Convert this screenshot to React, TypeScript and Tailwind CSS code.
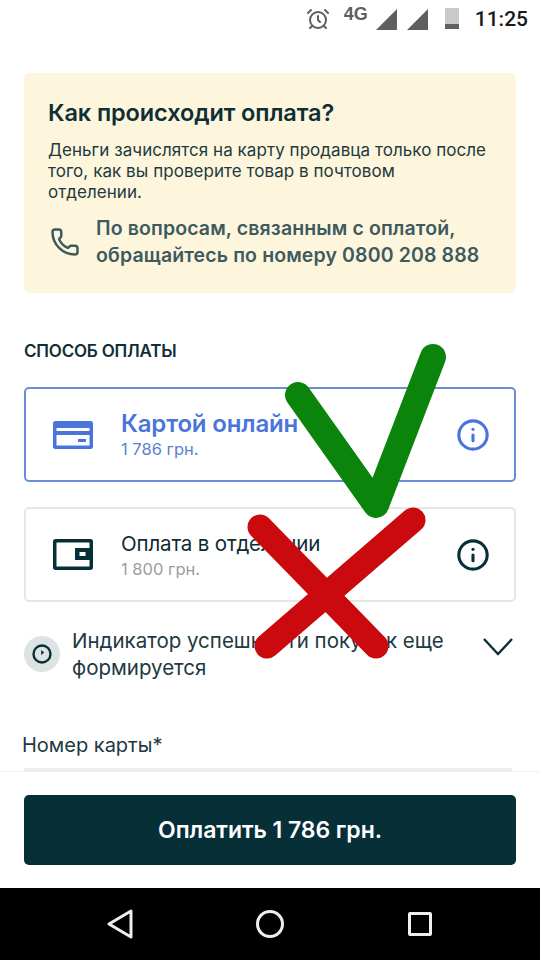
import React from "react";
import { AlarmClock, Phone, Info } from "lucide-react";

function Signal() {
  return (
    <svg width="21" height="21" viewBox="0 0 21 21" className="mt-[1px] text-[#5f5f5f]">
      <path d="M21 0v21H0z" fill="currentColor" />
    </svg>
  );
}

function CardIcon() {
  return (
    <svg width="40" height="28" viewBox="0 0 40 28">
      <rect x="0" y="0" width="40" height="28" rx="2.5" fill="#4a74dc" />
      <rect x="3.5" y="7" width="33" height="3" fill="#fff" />
      <path d="M3.5 14h33v10.5h-33z" fill="#fff" />
      <rect x="25" y="18" width="8" height="3" fill="#4a74dc" />
    </svg>
  );
}

function WalletIcon() {
  return (
    <svg width="40" height="31" viewBox="0 0 40 31">
      <rect x="1.75" y="1.75" width="36.5" height="27.5" rx="1" fill="none" stroke="#062f38" strokeWidth="3.5" />
      <rect x="22" y="9" width="16" height="12" fill="#062f38" />
      <rect x="26.5" y="13" width="6" height="4" fill="#fff" />
    </svg>
  );
}

function Method({ active, title, price, icon }: { active: boolean; title: string; price: string; icon: React.ReactNode }) {
  return (
    <div
      className={
        active
          ? "flex h-[95px] items-center rounded-[5px] border-2 border-[#6a8dd9] pl-[27px] pr-[24px]"
          : "flex h-[95px] items-center rounded-[5px] border-2 border-[#e6e6e6] pl-[27px] pr-[24px]"
      }
    >
      <div className="flex w-[40px] justify-center">{icon}</div>
      <div className="ml-[28px] flex flex-1 flex-col">
        <span
          className={
            active
              ? "text-[24px] leading-[28px] font-semibold tracking-[-0.15px] text-[#4a74dc]"
              : "text-[20.5px] leading-[28px] tracking-[-0.15px] text-[#0f2c33]"
          }
        >
          {title}
        </span>
        <span className={active ? "text-[16.5px] leading-[22px] text-[#5d80cf]" : "text-[16.5px] leading-[22px] text-[#9a9d9f]"}>
          {price}
        </span>
      </div>
      <Info size={34} strokeWidth={2.2} className={active ? "text-[#4a74dc]" : "text-[#062f38]"} />
    </div>
  );
}

export default function App() {
  return (
    <div className="relative flex h-[960px] w-[540px] flex-col overflow-hidden bg-white font-['Inter','Noto_Sans',sans-serif] text-[#0f2c33]">
      <div className="flex h-[37px] items-center justify-end pr-[12px] text-[#5f5f5f]">
        <AlarmClock size={24} strokeWidth={2} className="mt-[1px]" />
        <span className="mb-[10px] ml-[14px] font-['Liberation_Sans',sans-serif] text-[18px] leading-[20px] font-bold">4G</span>
        <div className="ml-[8px] flex gap-[10px]">
          <Signal />
          <Signal />
        </div>
        <div className="ml-[17px] flex h-[21px] w-[14px] flex-col justify-end bg-[#c9c9c9]">
          <div className="h-[5px] bg-[#606060]" />
        </div>
        <span className="ml-[16px] font-['Roboto',sans-serif] text-[21px] leading-[24px] font-medium text-[#1a1a1a]">11:25</span>
      </div>

      <div className="flex-1 px-[24px] pt-[36px]">
        <div className="h-[220px] rounded-[6px] bg-[#fdf6dc] pt-[25px] pl-[24px] pr-[16px]">
          <div className="text-[23.5px] leading-[30px] font-semibold tracking-[-0.1px] text-[#0e2f35]">Как происходит оплата?</div>
          <div className="mt-[12px] text-[17px] leading-[21px] tracking-[0.05px] text-[#21393f]">
            Деньги зачислятся на карту продавца только после
            <br />
            того, как вы проверите товар в почтовом
            <br />
            отделении.
          </div>
          <div className="mt-[12px] flex items-center">
            <Phone size={30} strokeWidth={2} className="ml-[2px] shrink-0 text-[#3e5a5e]" />
            <div className="ml-[16px] text-[19.5px] leading-[27px] font-semibold tracking-[0.12px] text-[#3e5a5e]">
              По вопросам, связанным с оплатой,
              <br />
              обращайтесь по номеру 0800 208 888
            </div>
          </div>
        </div>

        <div className="mt-[46px] text-[17px] leading-[24px] font-semibold tracking-[-0.2px] text-[#0e2f35]">СПОСОБ ОПЛАТЫ</div>

        <div className="mt-[24px] flex flex-col gap-[25px]">
          <Method active title="Картой онлайн" price="1 786 грн." icon={<CardIcon />} />
          <Method active={false} title="Оплата в отделении" price="1 800 грн." icon={<WalletIcon />} />
        </div>

        <div className="mt-[25px] flex items-center">
          <div className="flex size-[36px] shrink-0 items-center justify-center rounded-full bg-[#dde2e3]">
            <svg width="22" height="22" viewBox="0 0 22 22">
              <circle cx="11" cy="11" r="8.5" fill="none" stroke="#062f38" strokeWidth="2.4" />
              <path d="M10.2 7v5l3-2.5z" fill="#062f38" />
            </svg>
          </div>
          <div className="ml-[12px] flex-1 text-[20.5px] leading-[27px] whitespace-nowrap text-[#21393f]">
            Индикатор успешности покупок еще
            <br />
            формируется
          </div>
          <svg width="32" height="20" viewBox="0 0 32 20" className="mr-[2px] mb-[14px] shrink-0 text-[#0e2f35]">
            <path d="M2 2l14 15L30 2" fill="none" stroke="currentColor" strokeWidth="2.4" />
          </svg>
        </div>

        <div className="mt-[50px] -ml-[2px] text-[20px] leading-[28px] text-[#21393f]">Номер карты*</div>
      </div>

      <div className="relative h-[117px] border-t border-[#f2f2f2] bg-white px-[24px] pt-[23px]">
        <div className="absolute top-[-4px] right-[28px] left-[24px] h-[4px] bg-[#eeeeee]" />
        <button className="h-[70px] w-full rounded-[5px] bg-[#062f38] text-[23px] font-semibold tracking-[-0.05px] text-white">
          Оплатить 1 786 грн.
        </button>
      </div>

      <div className="flex h-[72px] items-center justify-center bg-black">
        <div className="flex w-[150px] justify-center">
          <svg width="26" height="30" viewBox="0 0 26 30">
            <path d="M24 2v26L2 15z" fill="none" stroke="#eee" strokeWidth="3" strokeLinejoin="round" />
          </svg>
        </div>
        <div className="flex w-[150px] justify-center">
          <div className="size-[28px] rounded-full border-[3px] border-[#eee]" />
        </div>
        <div className="flex w-[150px] justify-center">
          <div className="size-[24px] rounded-[2px] border-[3px] border-[#eee]" />
        </div>
      </div>

      <svg className="pointer-events-none absolute top-0 left-0" width="540" height="960" viewBox="0 0 540 960">
        <path d="M298 395L376 505L433 357" fill="none" stroke="#0b840b" strokeWidth="26" strokeLinecap="round" strokeLinejoin="round" />
        <path d="M260 527L376 646M413 520L267 646" fill="none" stroke="#cb0a10" strokeWidth="25" strokeLinecap="round" />
      </svg>
    </div>
  );
}
